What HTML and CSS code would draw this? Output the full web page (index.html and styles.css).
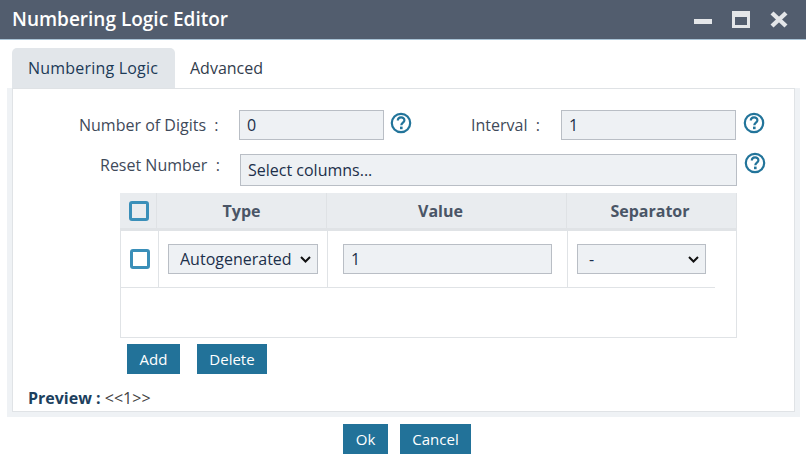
FILE: index.html
```html
<!DOCTYPE html>
<html lang="en">
<head>
  <meta charset="UTF-8">
  <title>Numbering Logic Editor</title>
  <link rel="stylesheet" href="styles.css">
</head>
<body>

  <header class="title-bar">
    <h1>Numbering Logic Editor</h1>
    <div class="window-icons">
      <svg class="icon-min" width="18" height="5" viewBox="0 0 18 5"><rect width="18" height="5" fill="#e4e6e9"/></svg>
      <svg class="icon-max" width="18" height="17" viewBox="0 0 18 17"><path d="M0 0h18v17H0z M3 6v8h12V6z" fill="#e4e6e9" fill-rule="evenodd"/></svg>
      <svg class="icon-close" width="18" height="17" viewBox="0 0 18 17"><path d="M2 2l14 13M16 2L2 15" stroke="#e4e6e9" stroke-width="4.4" fill="none"/></svg>
    </div>
  </header>

  <nav class="tabs">
    <a class="tab active">Numbering Logic</a>
    <a class="tab">Advanced</a>
  </nav>

  <section class="panel">
    <div class="panel-inner">
      <div class="row row-first">
        <label class="label label-digits">Number of Digits&nbsp; :</label>
        <input class="field field-digits" type="text" value="0">
        <svg class="help help-digits" width="22" height="22" viewBox="0 0 22 22"><circle cx="11" cy="11" r="9.2" fill="none" stroke="#22749a" stroke-width="2.2"/><path d="M7.8 8.6c0-4.3 6.6-4.3 6.6-.3 0 2.400-3.100 2.400-3.100 5" fill="none" stroke="#22749a" stroke-width="2.200"/><rect x="10" y="14.600" width="2.600" height="2.600" fill="#22749a"/></svg>
        <label class="label label-interval">Interval&nbsp; :</label>
        <input class="field field-interval" type="text" value="1">
        <svg class="help help-interval" width="22" height="22" viewBox="0 0 22 22"><circle cx="11" cy="11" r="9.2" fill="none" stroke="#22749a" stroke-width="2.2"/><path d="M7.8 8.6c0-4.3 6.6-4.3 6.6-.3 0 2.400-3.100 2.400-3.100 5" fill="none" stroke="#22749a" stroke-width="2.200"/><rect x="10" y="14.600" width="2.600" height="2.600" fill="#22749a"/></svg>
      </div>

      <div class="row row-second">
        <label class="label label-reset">Reset Number&nbsp; :</label>
        <input class="field field-reset" type="text" placeholder="Select columns...">
        <svg class="help help-reset" width="22" height="22" viewBox="0 0 22 22"><circle cx="11" cy="11" r="9.2" fill="none" stroke="#22749a" stroke-width="2.2"/><path d="M7.8 8.6c0-4.3 6.6-4.3 6.6-.3 0 2.400-3.100 2.400-3.100 5" fill="none" stroke="#22749a" stroke-width="2.200"/><rect x="10" y="14.600" width="2.600" height="2.600" fill="#22749a"/></svg>
      </div>

      <div class="grid-box">
        <div class="grid-head">
          <div class="cell check-cell"><input class="check" type="checkbox"></div>
          <div class="cell">Type</div>
          <div class="cell head-value">Value</div>
          <div class="cell head-sep">Separator</div>
        </div>
        <div class="grid-row">
          <div class="cell check-cell"><input class="check" type="checkbox"></div>
          <div class="cell">
            <select class="field select-type"><option>Autogenerated</option></select>
          </div>
          <div class="cell cell-value">
            <input class="field field-value" type="text" value="1">
          </div>
          <div class="cell">
            <select class="field select-sep"><option>-</option></select>
          </div>
        </div>
      </div>

      <div class="grid-buttons">
        <button class="btn btn-add">Add</button>
        <button class="btn btn-delete">Delete</button>
      </div>

      <p class="preview"><b>Preview :</b> &lt;&lt;1&gt;&gt;</p>
    </div>
  </section>

  <footer class="actions">
    <button class="btn btn-ok">Ok</button>
    <button class="btn btn-cancel">Cancel</button>
  </footer>

</body>
</html>
```

FILE: styles.css
```css
* {
  box-sizing: border-box;
}

html,
body {
  height: 455px;
  overflow: hidden;
}

body {
  margin: 0;
  background: #fff;
  font-family: "Open Sans", sans-serif;
  font-size: 16px;
  color: #333d4d;
}

.title-bar {
  height: 40px;
  padding: 0 18px 1px 12px;
  display: flex;
  align-items: center;
  justify-content: space-between;
  background: #525d6e;
  border-bottom: 1px solid #a9c3d6;
}

.title-bar h1 {
  margin: 0;
  font-size: 19px;
  font-weight: 600;
  color: #fff;
}

.window-icons {
  display: flex;
  align-items: center;
  gap: 20px;
}

.icon-min {
  margin-top: 4px;
}

.tabs {
  display: flex;
  height: 40px;
  margin-top: 8px;
  padding-left: 12px;
}

.tab {
  padding: 9px 15px 0;
  font-size: 16px;
  color: #333d4d;
}

.tab.active {
  width: 163px;
  padding-left: 16px;
  background: #e2e6ea;
  border-radius: 5px 5px 0 0;
  font-weight: 500;
  letter-spacing: .2px;
  color: #1c3a57;
}

.panel {
  width: 793px;
  height: 329px;
  margin-left: 7px;
  padding: 0 5px 5px;
  background: #eff2f5;
}

.panel-inner {
  height: 100%;
  background: #fff;
  border: 1px solid #e0e3e6;
  border-top-color: #dfe2e5;
}

.row {
  display: flex;
  align-items: flex-start;
}

.row-first {
  height: 65px;
  padding-top: 21px;
}

.row-second {
  height: 39px;
}

.label {
  color: #3f4a5a;
  white-space: pre;
}

.label-digits {
  margin-left: 66px;
  width: 160px;
  line-height: 30px;
}

.label-interval {
  margin-left: 59px;
  width: 90px;
  line-height: 30px;
}

.label-reset {
  margin-left: 87px;
  width: 140px;
  line-height: 22px;
}

.field {
  height: 30px;
  padding: 0 7px;
  background: #eef1f4;
  border: 1px solid #b9bec5;
  border-radius: 0;
  font-family: inherit;
  font-size: 16px;
  color: #1c2f4a;
}

.field::placeholder {
  color: #1c2f4a;
  opacity: 1;
}

.field-digits {
  width: 145px;
}

.field-interval {
  width: 175px;
}

.field-reset {
  width: 497px;
  height: 32px;
}

.help {
  flex: none;
}

.help-digits {
  margin: 2px 0 0 6px;
}

.help-interval {
  margin: 2px 0 0 7px;
}

.help-reset {
  margin: -2px 0 0 7px;
}

.grid-box {
  width: 617px;
  height: 145px;
  margin-left: 107px;
  border: 1px solid #e0e3e6;
  border-top: 0;
}

.grid-head,
.grid-row {
  display: grid;
}

.grid-head {
  height: 38px;
  margin-left: -1px;
  grid-template-columns: 37px 170px 240px 168px;
  background: #e9ecef;
  border-bottom: 3px solid #e0e3e6;
  font-weight: 700;
  color: #4a5566;
}

.grid-head .cell {
  display: flex;
  align-items: center;
  justify-content: center;
  border-right: 1px solid #dfe2e5;
}

.grid-head .cell:last-child {
  border-right: 0;
}

.grid-head .check-cell {
  padding-left: 2px;
}

.grid-head .head-value {
  padding-right: 12px;
}

.grid-head .head-sep {
  padding-right: 2px;
}

.grid-row {
  width: 594px;
  height: 57px;
  grid-template-columns: 38px 169px 240px 147px;
  border-bottom: 1px solid #e0e3e6;
}

.grid-row .cell {
  padding: 13px 0 0 9px;
  border-right: 1px solid #e0e3e6;
}

.grid-row .cell:last-child {
  border-right: 0;
}

.grid-row .cell-value {
  padding-left: 15px;
}

.grid-row .check-cell {
  padding: 0;
  display: flex;
  align-items: center;
  justify-content: center;
}

.check {
  appearance: none;
  width: 20px;
  height: 20px;
  margin: 0;
  background: #fff;
  border: 3px solid #3a8fb9;
  border-radius: 3px;
}

.grid-head .check {
  background: transparent;
}

select.field {
  appearance: none;
  padding-left: 11px;
  background-image: url("data:image/svg+xml,%3Csvg xmlns='http://www.w3.org/2000/svg' width='11' height='7' viewBox='0 0 11 7'%3E%3Cpath d='M1 1l4.500 4.500L10 1' fill='none' stroke='%23111' stroke-width='2'/%3E%3C/svg%3E");
  background-repeat: no-repeat;
  background-position: right 6px center;
}

.select-type {
  width: 150px;
}

.field-value {
  width: 209px;
}

.select-sep {
  width: 129px;
}

.btn {
  height: 30px;
  padding: 0;
  background: #227299;
  border: 0;
  font-family: inherit;
  font-size: 15px;
  color: #fff;
}

.grid-buttons {
  display: flex;
  gap: 17px;
  margin: 6px 0 0 114px;
}

.btn-add {
  width: 53px;
}

.btn-delete {
  width: 70px;
}

.preview {
  margin: 13px 0 0 15px;
  color: #444;
}

.preview b {
  color: #1c3f5e;
}

.actions {
  display: flex;
  justify-content: center;
  gap: 12px;
  margin-top: 7px;
  padding-left: 8px;
}

.btn-ok {
  width: 45px;
}

.btn-cancel {
  width: 71px;
}
```
